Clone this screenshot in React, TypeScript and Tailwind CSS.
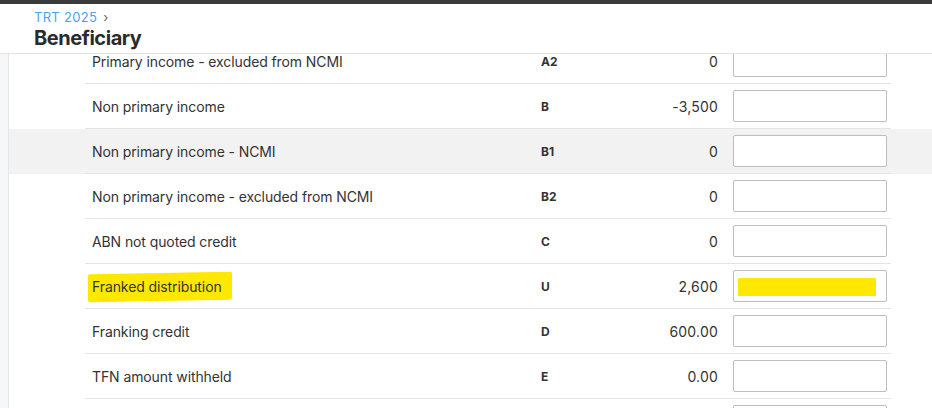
import React from "react";

type Row = {
  label: string;
  code: string;
  value: string;
  marked?: boolean;
  hover?: boolean;
};

const rows: Row[] = [
  { label: "Primary income - excluded from NCMI", code: "A2", value: "0" },
  { label: "Non primary income", code: "B", value: "-3,500" },
  { label: "Non primary income - NCMI", code: "B1", value: "0", hover: true },
  { label: "Non primary income - excluded from NCMI", code: "B2", value: "0" },
  { label: "ABN not quoted credit", code: "C", value: "0" },
  { label: "Franked distribution", code: "U", value: "2,600", marked: true },
  { label: "Franking credit", code: "D", value: "600.00" },
  { label: "TFN amount withheld", code: "E", value: "0.00" },
  { label: "", code: "", value: "" },
];

const BeneficiaryRow: React.FC<{ row: Row; first?: boolean }> = ({ row, first }) => {
  return (
    <div className={`${row.hover ? "bg-[#f2f2f2]" : "bg-white"} ${first ? "-mt-[15px]" : ""}`}>
      <div className="ml-[76px] w-[806px] h-[45px] flex items-center border-b border-[#e4e4e4]">
        <div className="w-[456px] pl-[7px] pt-[1px] text-[14px] tracking-[-0.1px] text-[#333]">
          {row.marked ? (
            <span className="relative inline-block">
              <span className="absolute -left-[4px] -right-[10px] top-[-3px] bottom-[-4px] bg-[#ffe800] rounded-[2px] -skew-y-1"></span>
              <span className="relative">{row.label}</span>
            </span>
          ) : (
            row.label
          )}
        </div>
        <div className="w-[80px] pt-[1px] text-[12px] font-bold text-[#333]">{row.code}</div>
        <div className="w-[97px] pt-[1px] text-right text-[14px] text-[#333] tracking-[0.2px]">{row.value}</div>
        <div className="ml-[15px] w-[154px] h-[32px] border border-[#bdbdbd] rounded-[2px] bg-white relative">
          {row.marked && (
            <span className="absolute left-[4px] top-[7px] w-[138px] h-[18px] bg-[#ffe800] rounded-[1px]"></span>
          )}
        </div>
      </div>
    </div>
  );
};

export default function App() {
  return (
    <div className="w-[932px] h-[408px] overflow-hidden bg-white flex flex-col font-['Inter','Noto_Sans',sans-serif]">
      <div className="h-[4px] bg-[#3a3a3a] shrink-0"></div>
      <div className="h-[50px] shrink-0 border-b border-[#e2e2e2] pl-[34px] pt-[5px]">
        <div className="flex items-center gap-[6px] text-[13px] leading-[16px] text-[#4aa3ee] tracking-[0.3px]">
          <span>TRT 2025</span>
          <span className="text-[#666] text-[13px]">›</span>
        </div>
        <div className="text-[20px] leading-[26px] font-bold tracking-[-0.45px] text-[#2b2b2b]">Beneficiary</div>
      </div>
      <div className="flex flex-1 overflow-hidden">
        <div className="w-[9px] shrink-0 bg-[#f6f7f8] border-r border-[#e6e6e6]"></div>
        <div className="flex-1 overflow-hidden">
          {rows.map((r, i) => (
            <BeneficiaryRow key={i} row={r} first={i === 0} />
          ))}
        </div>
      </div>
    </div>
  );
}
